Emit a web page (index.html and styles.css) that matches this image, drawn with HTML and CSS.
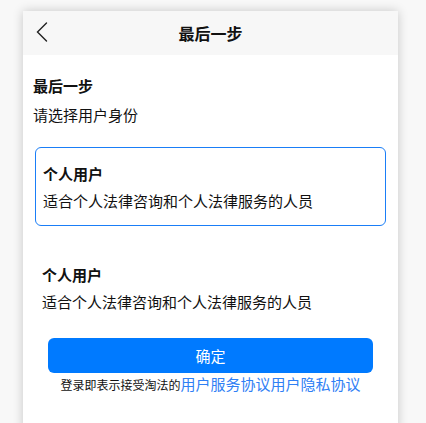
FILE: index.html
```html
<!DOCTYPE html>
<html lang="zh-CN">
<head>
<meta charset="utf-8">
<title>最后一步</title>
<link rel="stylesheet" href="styles.css">
</head>
<body>
<div class="page">
  <header class="header">
    <svg class="back" width="14" height="22" viewBox="0 0 14 22" aria-hidden="true">
      <polyline points="11.5,2 2.5,11 11.5,20" fill="none" stroke="#222" stroke-width="1.4" stroke-linecap="round" stroke-linejoin="miter"/>
    </svg>
    <h1 class="header-title">最后一步</h1>
  </header>
  <main class="content">
    <div class="intro">
      <div class="intro-title">最后一步</div>
      <div class="intro-sub">请选择用户身份</div>
    </div>
    <div class="option option-active">
      <div class="option-title">个人用户</div>
      <div class="option-desc">适合个人法律咨询和个人法律服务的人员</div>
    </div>
    <div class="option">
      <div class="option-title">个人用户</div>
      <div class="option-desc">适合个人法律咨询和个人法律服务的人员</div>
    </div>
    <button class="confirm" type="button">确定</button>
    <p class="terms">登录即表示接受淘法的<a class="terms-link" href="#">用户服务协议</a><a class="terms-link" href="#">用户隐私协议</a></p>
  </main>
</div>
</body>
</html>
```

FILE: styles.css
```css
html, body {
  margin: 0;
  padding: 0;
}
body {
  background: #f8f8f8;
  font-family: "Noto Sans CJK SC", "Noto Sans", sans-serif;
  color: #111;
  overflow: hidden;
}
.page {
  width: 375px;
  min-height: 420px;
  margin: 11px 0 0 23px;
  background: #fff;
  box-shadow: 0 0 10px rgba(0, 0, 0, 0.2);
}
.header {
  position: relative;
  height: 44px;
  background: #f7f7f7;
  display: flex;
  align-items: center;
  justify-content: center;
}
.back {
  position: absolute;
  left: 12px;
  top: 10px;
}
.header-title {
  margin: 0;
  font-size: 16px;
  font-weight: 700;
  line-height: 20px;
  color: #111;
}
.content {
  display: flex;
  flex-direction: column;
}
.intro {
  padding: 21px 10px 0;
}
.intro-title {
  font-size: 15px;
  font-weight: 700;
  line-height: 20px;
}
.intro-sub {
  margin-top: 9px;
  font-size: 15px;
  line-height: 20px;
}
.option {
  margin: 22px 12px 0;
  padding: 16px 7px 14px;
  border-radius: 6px;
}
.option-active {
  border: 1px solid #1a7ef7;
}
.option + .option {
  margin-top: 23px;
  padding-top: 16px;
}
.option-title {
  font-size: 15px;
  font-weight: 700;
  line-height: 20px;
}
.option-desc {
  margin-top: 7px;
  font-size: 15px;
  line-height: 20px;
}
.confirm {
  align-self: center;
  width: 325px;
  height: 35px;
  margin-top: 12px;
  border: none;
  border-radius: 6px;
  background: #007aff;
  color: #fff;
  font-family: inherit;
  font-size: 15px;
  line-height: 35px;
  padding: 0;
}
.terms {
  margin: 1px 0 0;
  text-align: center;
  font-size: 12px;
  line-height: 20px;
  color: #111;
}
.terms-link {
  color: #2f80f5;
  font-size: 15px;
  text-decoration: none;
}
```
